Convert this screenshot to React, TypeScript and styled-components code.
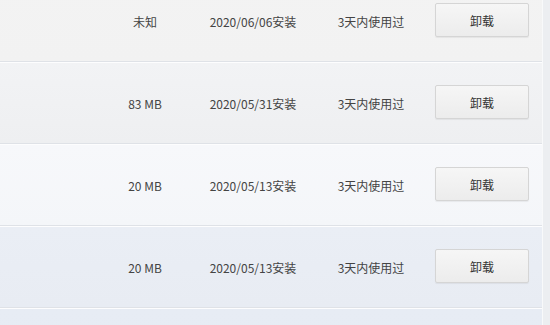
import styled, { createGlobalStyle } from 'styled-components'

const GlobalStyle = createGlobalStyle`
  html, body {
    margin: 0;
    padding: 0;
    background: #eceef1;
    overflow: hidden;
  }
  body {
    font-family: "Microsoft YaHei", "Noto Sans CJK SC", "Noto Sans", sans-serif;
  }
`

const Page = styled.div`
  display: flex;
  align-items: flex-start;
  width: 550px;
  height: 325px;
  overflow: hidden;
`

const List = styled.div`
  display: flex;
  flex-direction: column;
  flex-shrink: 0;
  width: 542px;
  margin-top: -20px;
  border-right: 1px solid #f8f9fa;
`

const Row = styled.div<{ $top: string; $bottom: string }>`
  display: grid;
  grid-template-columns: 1fr 108px 108px 128px 94px;
  align-items: center;
  flex-shrink: 0;
  height: 80px;
  padding-right: 13px;
  background: linear-gradient(${(p) => p.$top}, ${(p) => p.$bottom});
  border-top: 1px solid #fdfdfe;
  border-bottom: 1px solid #dfe2e7;
  font-size: 12px;
  color: #444;
`

const Cell = styled.div`
  text-align: center;
  white-space: nowrap;
`

const Button = styled.button`
  height: 34px;
  width: 94px;
  margin-top: -2px;
  font-family: inherit;
  font-size: 12px;
  color: #333;
  background: linear-gradient(#f6f6f6, #ececec);
  border: 1px solid #d5d5d5;
  border-radius: 2px;
  box-shadow: 0 1px 1px rgba(0, 0, 0, 0.06);
  cursor: pointer;
`

const apps = [
  { size: '未知', date: '2020/06/06安装', top: '#f3f3f3', bottom: '#f2f2f2' },
  { size: '83 MB', date: '2020/05/31安装', top: '#f2f3f5', bottom: '#eeeff1' },
  { size: '20 MB', date: '2020/05/13安装', top: '#f7f8fb', bottom: '#f4f6f9' },
  { size: '20 MB', date: '2020/05/13安装', top: '#eaeef5', bottom: '#e8ecf3' },
  { size: '20 MB', date: '2020/05/13安装', top: '#e7ecf4', bottom: '#e6ebf3' },
]

function App() {
  return (
    <Page>
      <GlobalStyle />
      <List>
        {apps.map((a, i) => (
          <Row key={i} $top={a.top} $bottom={a.bottom}>
            <div />
            <Cell>{a.size}</Cell>
            <Cell>{a.date}</Cell>
            <Cell>3天内使用过</Cell>
            <Button>卸载</Button>
          </Row>
        ))}
      </List>
    </Page>
  )
}

export default App
